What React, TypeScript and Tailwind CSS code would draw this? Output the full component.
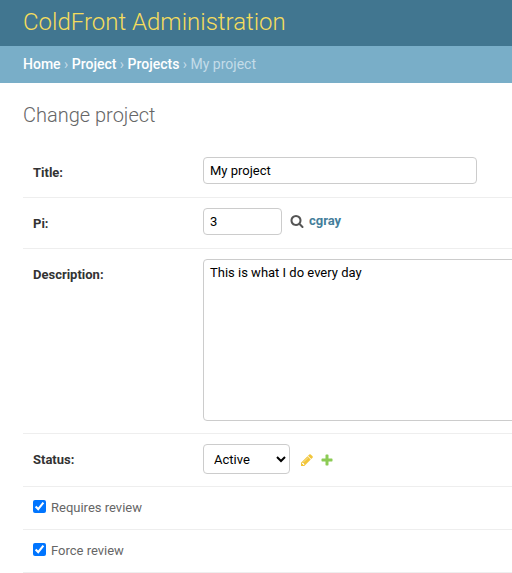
import React from "react";

function SearchIcon() {
  return (
    <svg viewBox="0 0 1792 1792" className="h-[14px] w-[14px] fill-[#555]" aria-hidden="true">
      <path d="M1216 832q0-185-131.5-316.5t-316.5-131.5-316.5 131.5-131.5 316.5 131.5 316.5 316.5 131.5 316.5-131.5 131.5-316.5zm512 832q0 52-38 90t-90 38q-54 0-90-38l-343-342q-179 124-399 124-143 0-273.5-55.5t-225-150-150-225-55.5-273.5 55.5-273.5 150-225 225-150 273.5-55.5 273.5 55.5 225 150 150 225 55.5 273.5q0 220-124 399l343 343q37 37 37 90z" />
    </svg>
  );
}

function PencilIcon() {
  return (
    <svg viewBox="0 0 1792 1792" className="h-[14px] w-[14px] fill-[#efb80b]" aria-hidden="true">
      <path d="M491 1536l91-91-235-235-91 91v107h128v128h107zm523-928q0-22-22-22-10 0-17 7l-542 542q-7 7-7 17 0 22 22 22 10 0 17-7l542-542q7-7 7-17zm-54-192l416 416-832 832h-416v-416zm683 96q0 53-37 90l-166 166-416-416 166-165q36-38 90-38 53 0 91 38l235 234q37 39 37 91z" />
    </svg>
  );
}

function PlusIcon() {
  return (
    <svg viewBox="0 0 1792 1792" className="h-[14px] w-[14px] fill-[#70bf2b]" aria-hidden="true">
      <path d="M1600 796v192q0 40-28 68t-68 28h-416v416q0 40-28 68t-68 28h-192q-40 0-68-28t-28-68v-416h-416q-40 0-68-28t-28-68v-192q0-40 28-68t68-28h416v-416q0-40 28-68t68-28h192q40 0 68 28t28 68v416h416q40 0 68 28t28 68z" />
    </svg>
  );
}

const field = "rounded-[4px] border border-[#ccc] bg-white text-[13px] text-black";

type RowProps = { id: string; label: string; children: React.ReactNode };

function FormRow({ id, label, children }: RowProps) {
  return (
    <div className="flex items-start border-b border-[#eee] px-[10px] pt-[10px] pb-3">
      <label htmlFor={id} className="w-[170px] shrink-0 pt-2 text-[13px] leading-4 font-bold text-[#333]">
        {label}
      </label>
      {children}
    </div>
  );
}

function CheckRow({ id, label }: { id: string; label: string }) {
  return (
    <div className="flex items-start gap-[5px] border-b border-[#eee] px-[10px] py-[13px]">
      <input id={id} type="checkbox" defaultChecked className="h-[13px] w-[13px] shrink-0" />
      <label htmlFor={id} className="text-[13px] leading-4 text-[#666]">
        {label}
      </label>
    </div>
  );
}

export default function App() {
  return (
    <div className="overflow-hidden bg-white font-['Roboto',sans-serif] text-[13px] text-[#333]">
      <header className="bg-[#417690] px-[23px] pt-[7px] pb-[9px]">
        <h1 className="text-2xl leading-[30px] font-light text-[#f5dd5d]">ColdFront Administration</h1>
      </header>
      <nav className="bg-[#79aec8] px-[23px] pt-2 pb-[9px] text-sm leading-5 text-[#c4dce8]">
        <a href="#home" className="font-medium text-white">Home</a>
        {" › "}
        <a href="#project" className="font-medium text-white">Project</a>
        {" › "}
        <a href="#projects" className="font-medium text-white">Projects</a>
        {" › My project"}
      </nav>
      <main className="pt-5 pl-[23px]">
        <h2 className="mb-5 text-xl leading-6 font-light text-[#666]">Change project</h2>
        <form>
          <FormRow id="title" label="Title:">
            <input id="title" type="text" defaultValue="My project" className={`${field} mb-px h-[27px] w-[274px] px-[6px]`} />
          </FormRow>
          <FormRow id="pi" label="Pi:">
            <input id="pi" type="text" defaultValue="3" className={`${field} mb-px h-[27px] w-[79px] px-[6px]`} />
            <div className="flex items-center gap-[5px] pt-[5px] pl-2">
              <button type="button" aria-label="Lookup">
                <SearchIcon />
              </button>
              <a href="#cgray" className="leading-4 font-bold text-[#447e9b]">cgray</a>
            </div>
          </FormRow>
          <FormRow id="description" label="Description:">
            <textarea
              id="description"
              defaultValue="This is what I do every day"
              className={`${field} h-[162px] w-[610px] shrink-0 resize-none px-[6px] py-[5px] leading-4`}
            />
          </FormRow>
          <FormRow id="status" label="Status:">
            <select id="status" defaultValue="Active" className={`${field} h-[30px] w-[87px] px-[6px]`}>
              <option>Active</option>
              <option>New</option>
              <option>Archived</option>
            </select>
            <div className="flex items-center gap-[6px] pt-[9px] pl-[10px] opacity-80">
              <button type="button" aria-label="Change status">
                <PencilIcon />
              </button>
              <button type="button" aria-label="Add status">
                <PlusIcon />
              </button>
            </div>
          </FormRow>
          <CheckRow id="requires-review" label="Requires review" />
          <CheckRow id="force-review" label="Force review" />
        </form>
      </main>
    </div>
  );
}
